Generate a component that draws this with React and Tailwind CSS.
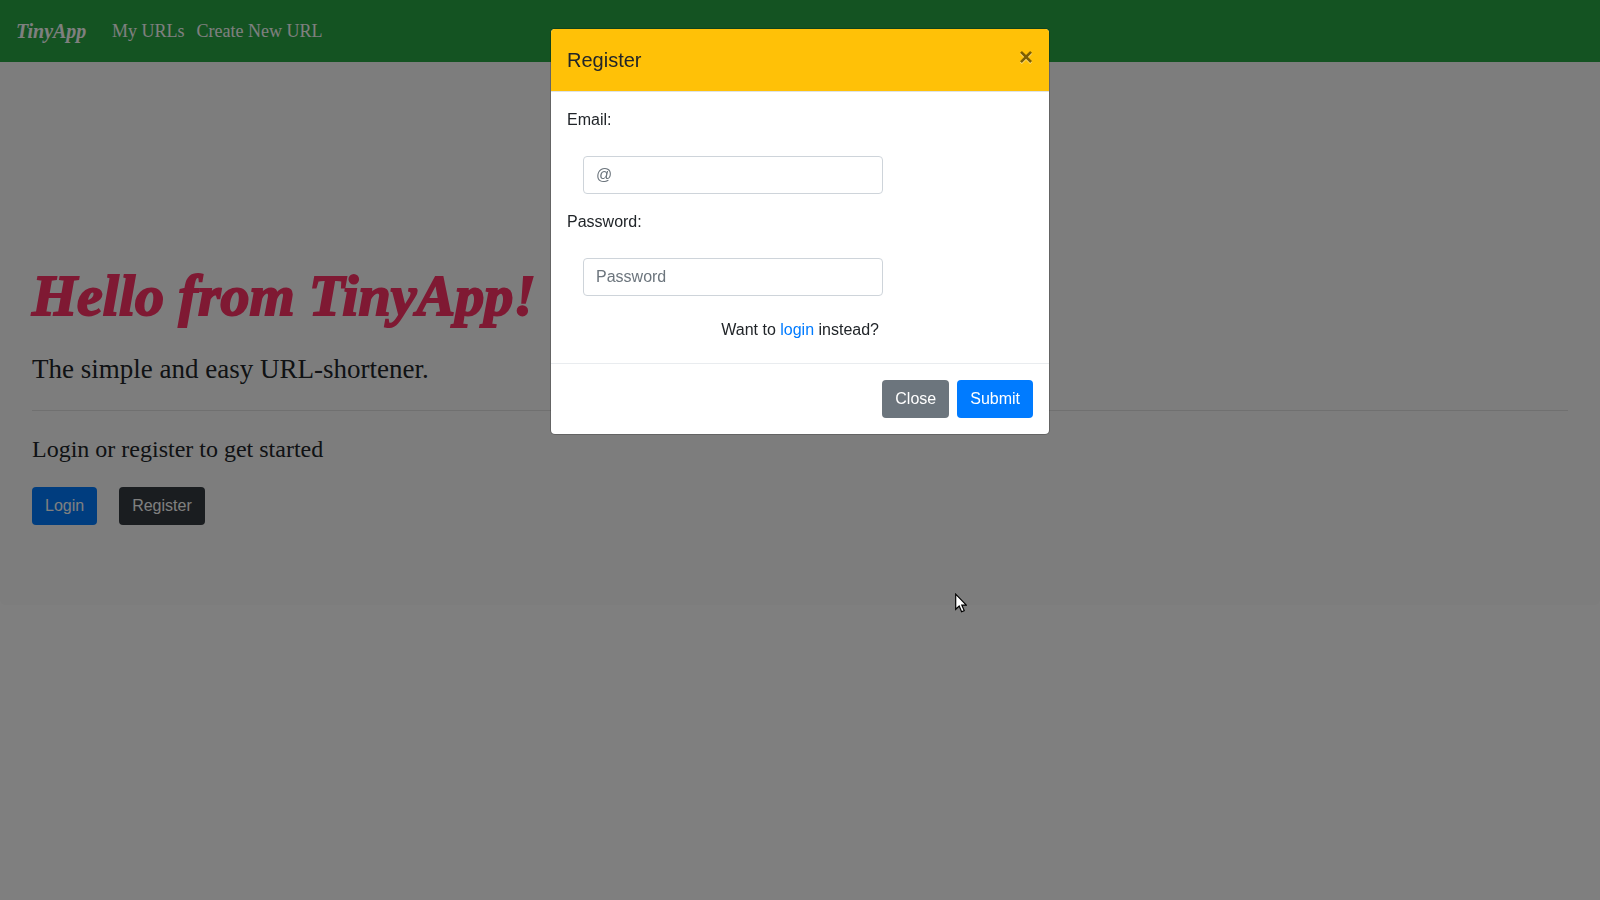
import React from "react";

const btn = "h-[38px] rounded-[4px] px-[13px] text-base leading-6 text-white";
const field =
  "ml-4 block h-[38px] w-[300px] max-w-full rounded-[4px] border border-[#ced4da] bg-white px-3 text-base text-[#495057] placeholder:text-[#6c757d] placeholder:opacity-100";

function Navbar() {
  return (
    <nav className="flex h-[62px] items-center bg-[#28a745] px-4 font-['Liberation_Serif',serif] text-lg text-white">
      <a href="#home" className="mr-6 w-[72px] whitespace-nowrap text-xl font-bold italic leading-[30px]">
        TinyApp
      </a>
      <a href="#urls" className="mr-3 whitespace-nowrap">My URLs</a>
      <a href="#new" className="whitespace-nowrap">Create New URL</a>
    </nav>
  );
}

function Hero() {
  return (
    <main className="rounded-b-[5px] bg-[#fbfbfb] px-8 pb-20 pt-[186px]">
      <h1 className="mb-2 font-['Liberation_Serif',serif] text-[58px] font-bold italic leading-[96px] text-[#ff3366] [-webkit-text-stroke:2px_#ff3366]">
        Hello from TinyApp!
      </h1>
      <p className="font-['Liberation_Serif',serif] text-[27px] leading-[34px] text-[#212529]">
        The simple and easy URL-shortener.
      </p>
      <hr className="my-6 border-black/10" />
      <p className="mb-6 font-['Liberation_Serif',serif] text-2xl leading-7 text-[#212529]">
        Login or register to get started
      </p>
      <div className="flex gap-[22px]">
        <button type="button" className={`${btn} bg-[#007bff]`}>Login</button>
        <button type="button" className={`${btn} bg-[#343a40]`}>Register</button>
      </div>
    </main>
  );
}

function RegisterModal() {
  return (
    <div className="fixed inset-0 overflow-hidden bg-black/50">
      <form
        role="dialog"
        aria-labelledby="register-title"
        className="mx-auto mt-7 w-full max-w-[500px] overflow-hidden rounded-[5px] border border-black/20 bg-white bg-clip-padding text-base leading-6 text-[#212529]"
      >
        <header className="flex items-start justify-between border-b border-[#dee2e6] bg-[#ffc107] p-4">
          <h2 id="register-title" className="text-xl leading-[30px]">Register</h2>
          <button
            type="button"
            aria-label="Close dialog"
            className="text-2xl font-bold leading-6 text-black opacity-50 [text-shadow:0_1px_0_#fff]"
          >
            ×
          </button>
        </header>
        <div className="px-4 pb-[21px] pt-4">
          <label htmlFor="email" className="mb-6 block">Email:</label>
          <input id="email" type="email" placeholder="@" className={`mb-4 ${field}`} />
          <label htmlFor="password" className="mb-6 block">Password:</label>
          <input id="password" type="password" placeholder="Password" className={`mb-[22px] ${field}`} />
          <p className="w-[312px] text-right">
            Want to <a href="#login" className="text-[#007bff]">login</a> instead?
          </p>
        </div>
        <footer className="flex justify-end gap-2 border-t border-[#e9ecef] p-4">
          <button type="button" className={`${btn} bg-[#6c757d]`}>Close</button>
          <button type="submit" className={`${btn} bg-[#007bff]`}>Submit</button>
        </footer>
      </form>
    </div>
  );
}

function Cursor() {
  return (
    <svg className="pointer-events-none fixed left-[955px] top-[593px] h-5 w-3" viewBox="0 0 12 20" aria-hidden="true">
      <path d="M.7 1.2V16.3L4.2 13 6.6 18.7 9.2 17.6 6.8 12.1H11.3Z" fill="#fff" stroke="#000" strokeWidth="1.2" />
    </svg>
  );
}

export default function App() {
  return (
    <div className="min-h-screen bg-white font-['Liberation_Sans',Arial,sans-serif]">
      <Navbar />
      <Hero />
      <RegisterModal />
      <Cursor />
    </div>
  );
}
